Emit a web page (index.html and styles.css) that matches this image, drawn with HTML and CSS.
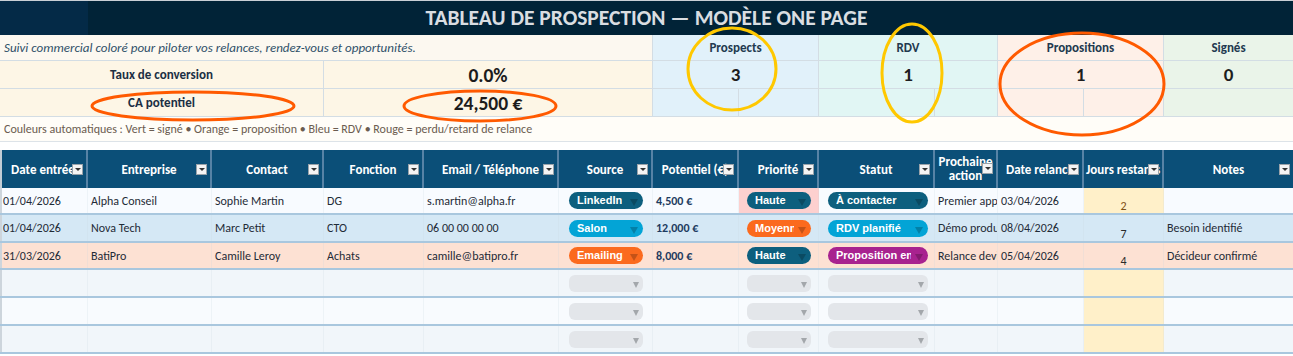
FILE: index.html
```html
<!DOCTYPE html>
<html lang="fr">
<head>
<meta charset="utf-8">
<title>Tableau de prospection</title>
<link rel="stylesheet" href="styles.css">
</head>
<body>
<div class="page">
  <div class="title">TABLEAU DE PROSPECTION — MODÈLE ONE PAGE</div>

  <div class="grid top r-sub">
    <div class="subtitle span6">Suivi commercial coloré pour piloter vos relances, rendez-vous et opportunités.</div>
    <div class="kpi-head k-blue span2">Prospects</div>
    <div class="kpi-head k-teal span2">RDV</div>
    <div class="kpi-head k-peach span2">Propositions</div>
    <div class="kpi-head k-green">Signés</div>
  </div>

  <div class="grid top r-kpi">
    <div class="label span3">Taux de conversion</div>
    <div class="value span3">0.0%</div>
    <div class="kpi-num k-blue span2">3</div>
    <div class="kpi-num k-teal span2">1</div>
    <div class="kpi-num k-peach span2">1</div>
    <div class="kpi-num k-green">0</div>
  </div>

  <div class="grid top r-kpi">
    <div class="label span3">CA potentiel</div>
    <div class="value span3">24,500 €</div>
    <div class="kpi-cell k-blue"></div>
    <div class="kpi-cell k-blue"></div>
    <div class="kpi-cell k-teal"></div>
    <div class="kpi-cell k-teal"></div>
    <div class="kpi-cell k-peach"></div>
    <div class="kpi-cell k-peach"></div>
    <div class="kpi-cell k-green"></div>
  </div>

  <div class="legend">Couleurs automatiques : Vert = signé • Orange = proposition • Bleu = RDV • Rouge = perdu/retard de relance</div>
  <div class="spacer"></div>

  <div class="grid thead">
    <div class="th">Date entrée<i class="filter"></i></div>
    <div class="th">Entreprise<i class="filter"></i></div>
    <div class="th">Contact<i class="filter"></i></div>
    <div class="th">Fonction<i class="filter"></i></div>
    <div class="th">Email / Téléphone<i class="filter"></i></div>
    <div class="th">Source<i class="filter"></i></div>
    <div class="th">Potentiel (€)<i class="filter"></i></div>
    <div class="th">Priorité<i class="filter"></i></div>
    <div class="th">Statut<i class="filter"></i></div>
    <div class="th th-wrap">Prochaine<br>action<i class="filter filter-hi"></i></div>
    <div class="th">Date relance<i class="filter"></i></div>
    <div class="th th-left">Jours restants<i class="filter"></i></div>
    <div class="th">Notes<i class="filter"></i></div>
  </div>

  <div class="grid row r-white h27">
    <div class="td">01/04/2026</div>
    <div class="td">Alpha Conseil</div>
    <div class="td">Sophie Martin</div>
    <div class="td">DG</div>
    <div class="td">s.martin@alpha.fr</div>
    <div class="td c-src"><span class="pill p-dark w-src"><span>LinkedIn</span></span></div>
    <div class="td money">4,500 €</div>
    <div class="td c-pri hot"><span class="pill p-dark w-pri"><span>Haute</span></span></div>
    <div class="td c-sta"><span class="pill p-dark w-sta"><span>À contacter</span></span></div>
    <div class="td">Premier appel</div>
    <div class="td">03/04/2026</div>
    <div class="td days warn">2</div>
    <div class="td"></div>
  </div>

  <div class="grid row r-blue h28">
    <div class="td">01/04/2026</div>
    <div class="td">Nova Tech</div>
    <div class="td">Marc Petit</div>
    <div class="td">CTO</div>
    <div class="td">06 00 00 00 00</div>
    <div class="td c-src"><span class="pill p-cyan w-src"><span>Salon</span></span></div>
    <div class="td money">12,000 €</div>
    <div class="td c-pri"><span class="pill p-orange w-pri"><span>Moyenne</span></span></div>
    <div class="td c-sta"><span class="pill p-cyan w-sta"><span>RDV planifié</span></span></div>
    <div class="td">Démo produit</div>
    <div class="td">08/04/2026</div>
    <div class="td days">7</div>
    <div class="td">Besoin identifié</div>
  </div>

  <div class="grid row r-peach h27">
    <div class="td">31/03/2026</div>
    <div class="td">BatiPro</div>
    <div class="td">Camille Leroy</div>
    <div class="td">Achats</div>
    <div class="td">camille@batipro.fr</div>
    <div class="td c-src"><span class="pill p-orange w-src"><span>Emailing</span></span></div>
    <div class="td money">8,000 €</div>
    <div class="td c-pri"><span class="pill p-dark w-pri"><span>Haute</span></span></div>
    <div class="td c-sta"><span class="pill p-magenta w-sta"><span>Proposition envoyée</span></span></div>
    <div class="td">Relance devis</div>
    <div class="td">05/04/2026</div>
    <div class="td days">4</div>
    <div class="td">Décideur confirmé</div>
  </div>

  <div class="grid row r-empty-a h28">
    <div class="td"></div><div class="td"></div><div class="td"></div><div class="td"></div><div class="td"></div>
    <div class="td c-src"><span class="pill p-empty w-src"></span></div>
    <div class="td"></div>
    <div class="td c-pri"><span class="pill p-empty w-pri"></span></div>
    <div class="td c-sta"><span class="pill p-empty w-sta"></span></div>
    <div class="td"></div><div class="td"></div>
    <div class="td warn"></div>
    <div class="td"></div>
  </div>

  <div class="grid row r-empty-b h28">
    <div class="td"></div><div class="td"></div><div class="td"></div><div class="td"></div><div class="td"></div>
    <div class="td c-src"><span class="pill p-empty w-src"></span></div>
    <div class="td"></div>
    <div class="td c-pri"><span class="pill p-empty w-pri"></span></div>
    <div class="td c-sta"><span class="pill p-empty w-sta"></span></div>
    <div class="td"></div><div class="td"></div>
    <div class="td warn"></div>
    <div class="td"></div>
  </div>

  <div class="grid row r-empty-a h28">
    <div class="td"></div><div class="td"></div><div class="td"></div><div class="td"></div><div class="td"></div>
    <div class="td c-src"><span class="pill p-empty w-src"></span></div>
    <div class="td"></div>
    <div class="td c-pri"><span class="pill p-empty w-pri"></span></div>
    <div class="td c-sta"><span class="pill p-empty w-sta"></span></div>
    <div class="td"></div><div class="td"></div>
    <div class="td warn"></div>
    <div class="td"></div>
  </div>

  <svg class="marks" width="1293" height="356" viewBox="0 0 1293 356" aria-hidden="true">
    <ellipse cx="193" cy="106" rx="101" ry="14" fill="none" stroke="#ff5a00" stroke-width="3"/>
    <ellipse cx="480" cy="106" rx="76" ry="15" fill="none" stroke="#ff5a00" stroke-width="3"/>
    <ellipse cx="732" cy="69" rx="44" ry="41" fill="none" stroke="#ffc800" stroke-width="3"/>
    <ellipse cx="912" cy="73" rx="30" ry="49" fill="none" stroke="#ffc800" stroke-width="3"/>
    <ellipse cx="1082" cy="84" rx="82" ry="51" fill="none" stroke="#ff5a00" stroke-width="3"/>
  </svg>
</div>
</body>
</html>
```

FILE: styles.css
```css
* { box-sizing: border-box; margin: 0; padding: 0; }

:root {
  --cols: 88px 124px 112px 100px 135px 94px 86px 80px 116px 63px 86px 80px 129px;
}

body {
  width: 1293px;
  height: 356px;
  overflow: hidden;
  background: #ffffff;
  font-family: Carlito, Lato, "Open Sans", "DejaVu Sans", sans-serif;
  color: #1f2b37;
}

.page { position: relative; width: 1293px; height: 356px; }

.grid { display: grid; grid-template-columns: var(--cols); }

.span2 { grid-column: span 2; }
.span3 { grid-column: span 3; }
.span6 { grid-column: span 6; }

/* Title */
.title {
  height: 35px;
  border-top: 1px solid #c9cfd5;
  background: linear-gradient(to right, #042a47 0, #042a47 88px, #012337 88px);
  color: #d9dde1;
  font-weight: 700;
  font-size: 21.5px;
  display: flex;
  align-items: center;
  justify-content: center;
}

/* KPI area */
.top > div {
  border-right: 1px solid #d3dde4;
  border-bottom: 1px solid #d3dde4;
  display: flex;
  align-items: center;
  justify-content: center;
}
.top > div:last-child { border-right: none; }
.r-sub { height: 26px; }
.r-kpi { height: 28px; }

.subtitle {
  justify-content: flex-start !important;
  padding-left: 4px;
  background: #fcf8f0;
  font-style: italic;
  font-size: 13px;
  color: #2f5069;
}
.label {
  background: #fdf6e6;
  font-weight: 700;
  font-size: 13px;
  color: #1b2f44;
}
.value {
  background: #fdf6e6;
  font-weight: 700;
  font-size: 19.5px;
  color: #1c1c1c;
}
.kpi-head { font-weight: 700; font-size: 13px; color: #22394f; }
.kpi-num { font-weight: 700; font-size: 19px; color: #1e1e1e; }

.k-blue { background: #e1f1fa; }
.k-teal { background: #e1f6f4; }
.k-peach { background: #fef0e8; }
.k-green { background: #eaf4e9; }

.legend {
  height: 25px;
  background: #fffdf8;
  border-bottom: 1px solid #dde3e8;
  font-size: 12px;
  color: #6b5c50;
  padding-left: 4px;
  display: flex;
  align-items: center;
}
.spacer { height: 8px; background: #ffffff; }

/* Table header */
.thead { height: 38px; background: #0b4f78; }
.th {
  position: relative;
  color: #ffffff;
  font-weight: 700;
  font-size: 13px;
  border-right: 2px solid #5783a6;
  display: flex;
  align-items: center;
  justify-content: center;
  text-align: center;
  white-space: nowrap;
  overflow: hidden;
}
.th:first-child { box-shadow: inset 2px 0 #c3cdd5; }
.th:last-child { border-right: none; }
.th-wrap { white-space: normal; line-height: 14px; }
.th-left { justify-content: flex-start; padding-left: 2px; }

.filter {
  position: absolute;
  right: 3px;
  top: 14px;
  width: 11px;
  height: 11px;
  background: #f4f4f4;
  border: 1px solid #9aa3aa;
}
.filter::after {
  content: "";
  position: absolute;
  left: 2px;
  top: 3px;
  border-left: 3px solid transparent;
  border-right: 3px solid transparent;
  border-top: 3px solid #333;
}
.filter-hi { top: 13px; }

/* Table rows */
.row { border-bottom: 2px solid #a9c7de; }
.h27 { height: 27px; }
.h28 { height: 28px; }

.td {
  display: flex;
  align-items: center;
  padding: 0 3px;
  font-size: 12px;
  white-space: nowrap;
  overflow: hidden;
  border-right: 1px solid rgba(200, 212, 222, 0.22);
}
.td:first-child { box-shadow: inset 2px 0 #cdd5dc; }
.td:last-child { border-right: none; }

.r-white { background: #f8fbff; }
.r-blue { background: #d5e8f5; }
.r-peach { background: #fde1d3; }
.r-empty-a { background: #f1f6fa; }
.r-empty-b { background: #f8fbfe; }

.money { font-weight: 700; font-size: 12px; color: #1d3b60; }
.hot { background: #fdd0cf; }
.warn { background: #fff0c9; }
.days {
  justify-content: center;
  align-items: flex-end;
  padding-bottom: 0;
  line-height: 14px;
  color: #2a2a2a;
}
.days.warn { color: #7e4f14; }

.c-src { padding-left: 10px; }
.c-pri { padding-left: 8px; }
.c-sta { padding-left: 9px; }

.pill {
  position: relative;
  display: flex;
  align-items: center;
  height: 17px;
  border-radius: 9px;
  padding: 0 17px 1px 8px;
  color: #ffffff;
  font-family: "Liberation Sans", Arial, sans-serif;
  font-weight: 700;
  font-size: 11px;
  flex: none;
}
.pill > span { overflow: hidden; white-space: nowrap; display: block; }
.pill::after {
  content: "";
  position: absolute;
  right: 5px;
  top: 7px;
  border-left: 4px solid transparent;
  border-right: 4px solid transparent;
  border-top: 7px solid rgba(0, 0, 0, 0.22);
}
.w-src { width: 74px; }
.w-pri { width: 64px; }
.w-sta { width: 100px; }

.p-dark { background: #0d5f7e; }
.p-cyan { background: #03a4d6; }
.p-orange { background: #fb6a1e; }
.p-magenta { background: #a8228f; }
.p-empty { background: #e3e6ea; border-radius: 6px; }
.p-empty::after { border-top-color: #a3a7ab; right: 4px; border-left-width: 3px; border-right-width: 3px; border-top-width: 6px; }

/* Hand-drawn annotation marks */
.marks {
  position: absolute;
  left: 0;
  top: 0;
  pointer-events: none;
}
```
